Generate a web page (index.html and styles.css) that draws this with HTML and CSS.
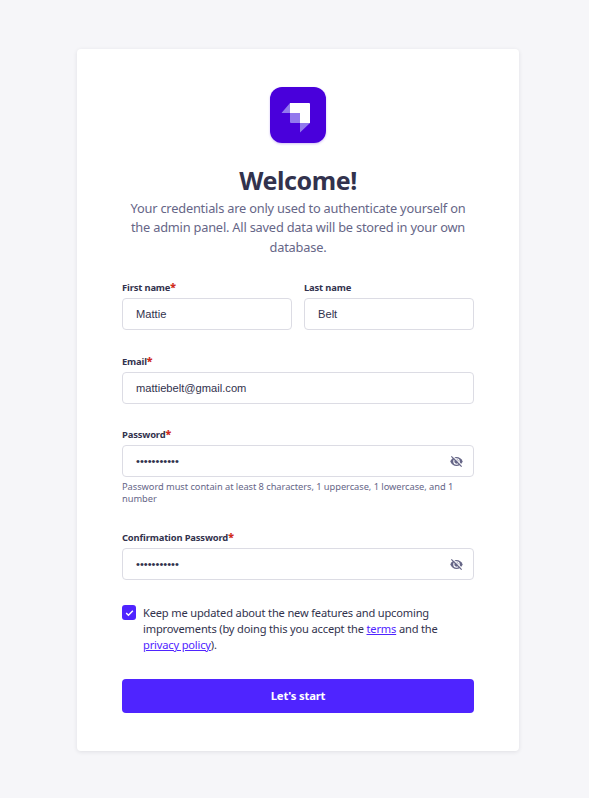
FILE: index.html
```html
<!DOCTYPE html>
<html lang="en">
<head>
<meta charset="utf-8">
<title>Welcome</title>
<link rel="stylesheet" href="styles.css">
</head>
<body>
<svg class="defs" width="0" height="0" aria-hidden="true">
  <symbol id="eye-off" viewBox="0 0 24 24">
    <path d="M.5 12C2.500 7 7 3.800 12 3.800S21.500 7 23.500 12C21.500 17 17 20.200 12 20.200S2.500 17 .5 12z"/>
    <circle cx="12" cy="12" r="5" fill="none" stroke="#fff" stroke-width="2"/>
    <path d="M4.500 1.500 23 20" stroke="#fff" stroke-width="2" fill="none"/>
    <path d="M2.500 2.500 21.500 21.500" stroke="#666687" stroke-width="2.200" fill="none"/>
  </symbol>
</svg>
<main class="card">
  <header class="intro">
    <svg class="logo" viewBox="0 0 56 56" role="img" aria-label="Logo">
      <rect width="56" height="56" rx="12" fill="#4900db"/>
      <path fill="#fff" d="M20 16h19a1 1 0 0 1 1 1v19H30V26H20z"/>
      <path fill="#9279ed" d="M20 26h10v10H21a1 1 0 0 1-1-1zM20 16v10h-8.500zM30 36h10l-10 9.500z"/>
    </svg>
    <h1>Welcome!</h1>
    <p>Your credentials are only used to authenticate yourself on<br>the admin panel. All saved data will be stored in your own<br>database.</p>
  </header>
  <form>
    <div class="row">
      <div class="field"><label for="first">First name<b>*</b></label><input id="first" value="Mattie"></div>
      <div class="field"><label for="last">Last name</label><input id="last" value="Belt"></div>
    </div>
    <div class="field email"><label for="email">Email<b>*</b></label><input id="email" value="mattiebelt@gmail.com"></div>
    <div class="field password"><label>Password<b>*</b></label>
      <div class="secret"><span>•••••••••••</span><svg class="eye"><use href="#eye-off"/></svg></div>
      <p class="hint">Password must contain at least 8 characters, 1 uppercase, 1 lowercase, and 1<br>number</p>
    </div>
    <div class="field confirm"><label>Confirmation Password<b>*</b></label>
      <div class="secret"><span>•••••••••••</span><svg class="eye"><use href="#eye-off"/></svg></div>
    </div>
    <div class="news">
      <span class="check"><svg viewBox="0 0 10 8"><path d="M1.300 4 3.800 6.400 8.700 1.500"/></svg></span>
      <p>Keep me updated about the new features and upcoming<br>improvements (by doing this you accept the <a href="#">terms</a> and the<br><a href="#">privacy policy</a>).</p>
    </div>
    <button type="button">Let's start</button>
  </form>
</main>
</body>
</html>
```
FILE: styles.css
```css
* { box-sizing: border-box; }
body {
  margin: 0;
  height: 798px;
  padding: 49px 70px 0 77px;
  background: #f6f6f9;
  color: #32324d;
  font-family: "Noto Sans", sans-serif;
  overflow: hidden;
}
.defs { position: absolute; }
.card {
  width: 442px;
  height: 702px;
  padding: 38px 45px;
  background: #fff;
  border-radius: 4px;
  box-shadow: 0 1px 4px rgba(33, 33, 52, .1);
}
p, h1 { margin: 0; white-space: nowrap; }
.intro { display: flex; flex-direction: column; align-items: center; text-align: center; height: 193px; }
.logo { width: 56px; height: 56px; filter: drop-shadow(0 1px 1px rgba(73, 0, 219, .25)); }
h1 { margin-top: 20px; font-size: 25px; line-height: 34px; letter-spacing: -.4px; }
.intro p { margin-top: 1.600px; font-size: 12.800px; line-height: 19.500px; letter-spacing: -.2px; color: #666687; }
.row { display: flex; gap: 12px; height: 74px; }
.row .field { flex: 1; min-width: 0; }
label { display: block; height: 18px; font-size: 9.400px; line-height: 15px; font-weight: 700; letter-spacing: -.15px; white-space: nowrap; }
label b { color: #d02b20; font-size: 10.500px; line-height: 10px; }
input, .secret {
  display: flex;
  align-items: center;
  width: 100%;
  height: 32px;
  padding: 0 13px;
  border: 1px solid #dcdce4;
  border-radius: 4px;
  background: #fff;
  color: #32324d;
  font: 11.150px "Liberation Sans", sans-serif;
  outline: 0;
}
.email { height: 73px; }
.password { height: 103px; }
.confirm { height: 75px; }
.secret { padding-right: 10px; justify-content: space-between; }
.eye { width: 13px; height: 13px; fill: #666687; }
.hint { margin-top: 4px; font-size: 9.300px; line-height: 12px; color: #666687; letter-spacing: -.05px; }
.news { display: flex; gap: 7px; height: 62px; }
.check { display: flex; align-items: center; justify-content: center; width: 14px; height: 15px; border-radius: 3px; background: #4f24ff; }
.check svg { width: 9px; height: 8px; fill: none; stroke: #fff; stroke-width: 1.600; }
.news p { font-size: 11.100px; line-height: 16px; letter-spacing: -.17px; }
a { color: #4f24ff; }
button { display: block; width: 100%; height: 34px; margin-top: 12px; padding: 0 0 2px; border: 0; border-radius: 4px; background: #4f24ff; color: #fff; font: 700 11.300px "Noto Sans", sans-serif; letter-spacing: -.2px; }
```
